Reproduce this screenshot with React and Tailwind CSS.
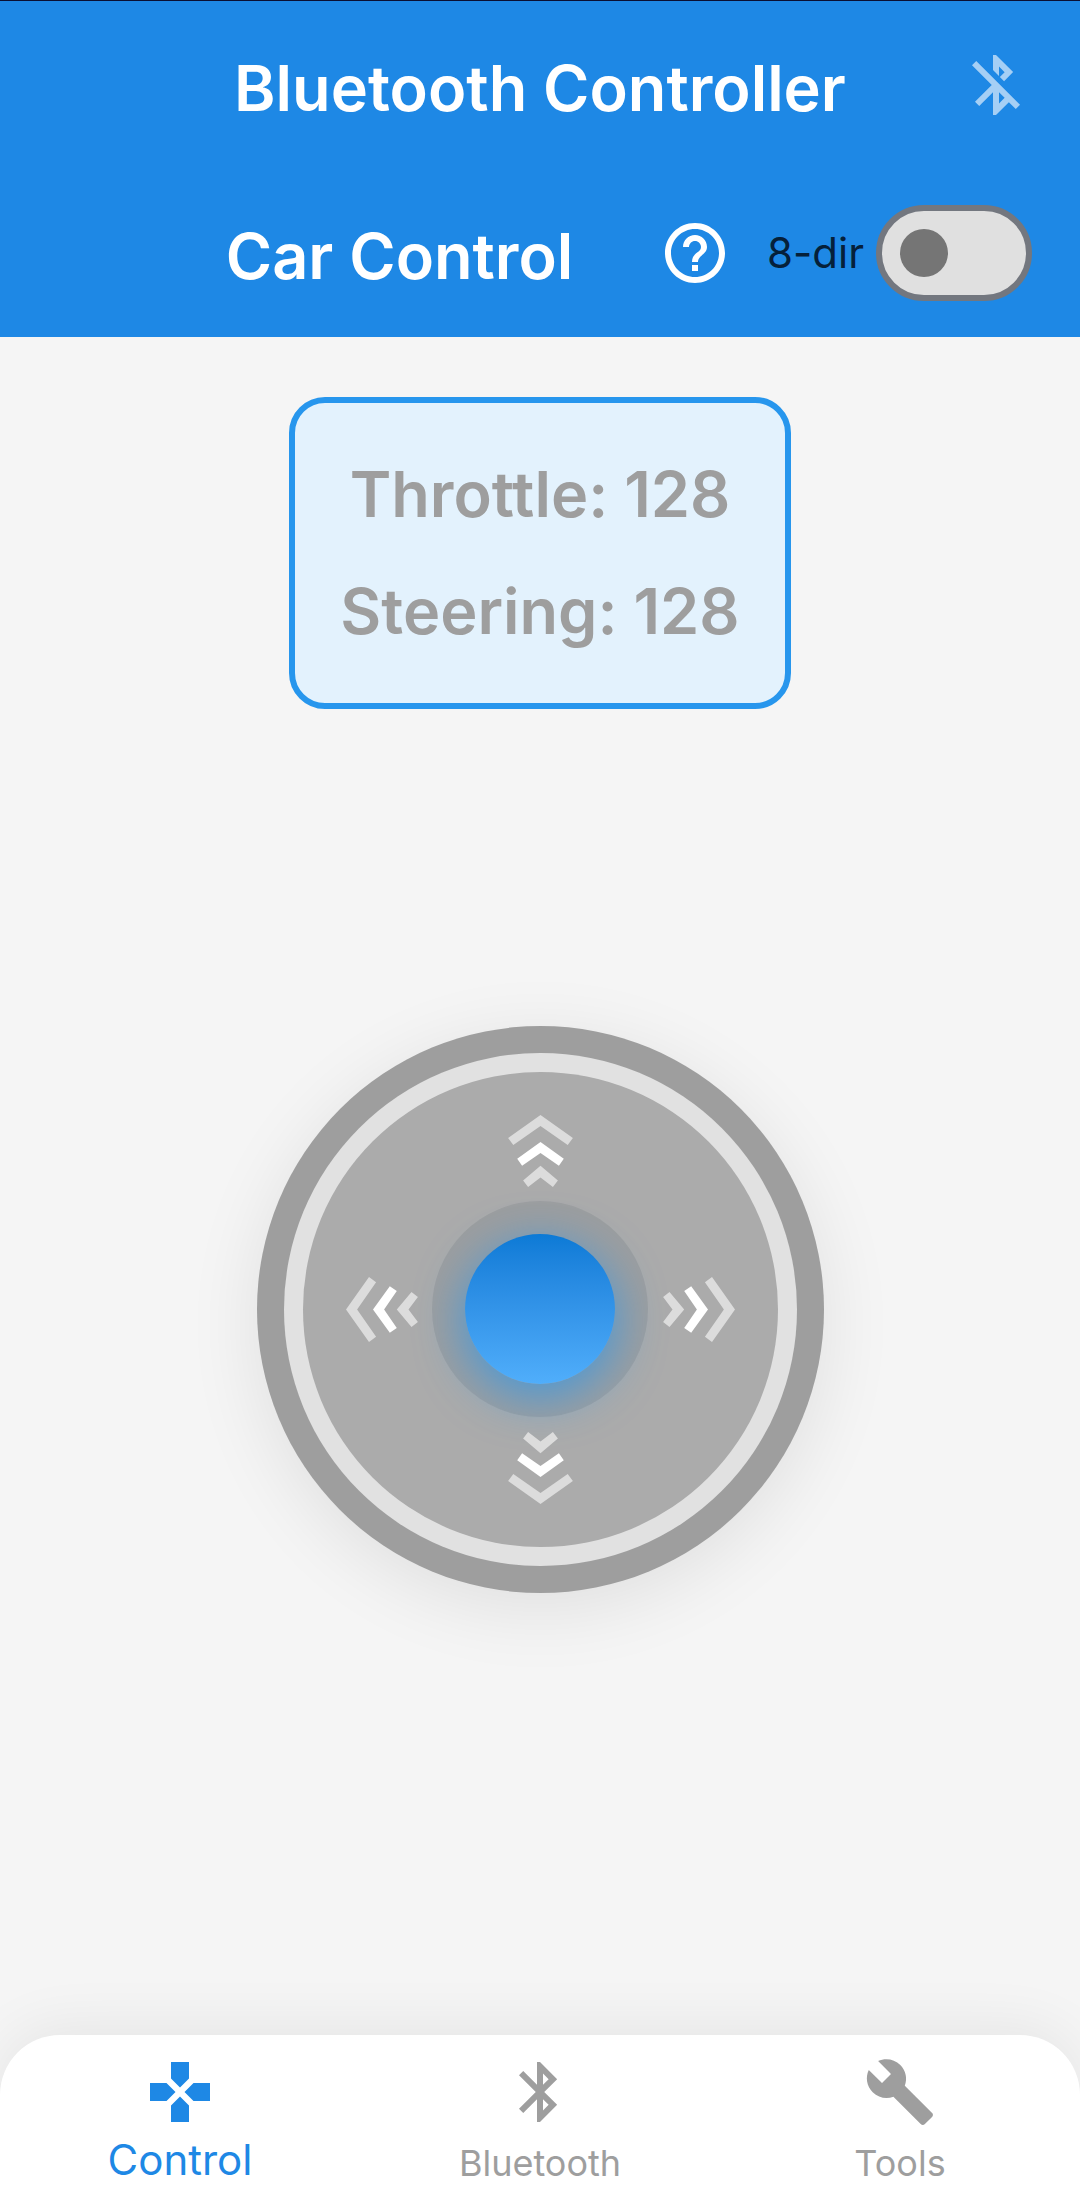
import React, { useState } from "react";
import {
  MdBluetooth,
  MdBluetoothDisabled,
  MdBuild,
  MdGamepad,
  MdHelpOutline,
} from "react-icons/md";

const tabs = [
  { id: "control", label: "Control", Icon: MdGamepad },
  { id: "bluetooth", label: "Bluetooth", Icon: MdBluetooth },
  { id: "tools", label: "Tools", Icon: MdBuild },
];

function DirectionSwitch({ checked, onChange }) {
  return (
    <label className="flex cursor-pointer items-center gap-3 text-[42px] leading-none text-[#05203a]">
      <span>8-dir</span>
      <span className="flex h-24 w-[156px] items-center rounded-full border-6 border-[#73777f] bg-[#e0e0e0] px-[18px] has-checked:justify-end has-checked:bg-[#90caf9]">
        <input
          type="checkbox"
          role="switch"
          checked={checked}
          onChange={(e) => onChange(e.target.checked)}
          className="size-12 cursor-pointer appearance-none rounded-full bg-[#757575]"
        />
      </span>
    </label>
  );
}

function Header({ eightDir, setEightDir }) {
  return (
    <header className="border-t border-[#0a0f33] bg-[#1e88e5] text-white">
      <div className="flex h-42 items-center justify-end pr-12 pl-[120px]">
        <h1 className="flex-1 pt-1.5 text-center text-[63px] leading-none font-semibold">
          Bluetooth Controller
        </h1>
        <button type="button" aria-label="Bluetooth disconnected" className="text-[#a5cff5]">
          <MdBluetoothDisabled className="size-18" />
        </button>
      </div>
      <div className="flex h-42 items-center pr-12 pl-44">
        <h2 className="flex-1 pt-1.5 text-center text-[63px] leading-none font-semibold whitespace-nowrap">
          Car Control
        </h2>
        <button type="button" aria-label="Help" className="px-9">
          <MdHelpOutline className="size-18" />
        </button>
        <DirectionSwitch checked={eightDir} onChange={setEightDir} />
      </div>
    </header>
  );
}

function Readout({ throttle, steering }) {
  return (
    <section className="flex flex-col items-center gap-9 rounded-[36px] border-6 border-[#2796ed] bg-[#e3f2fd] px-[45px] py-[51px] text-[63px] leading-[81px] font-semibold text-[#9e9e9e]">
      <p>Throttle: {throttle}</p>
      <p>Steering: {steering}</p>
    </section>
  );
}

const arrowTurns = [0, 90, 180, 270];

function Arrows() {
  return (
    <g>
      <polygon
        fill="#dcdcdc"
        points="0,-194.5 32.4,-171.5 27.2,-164.4 0,-183.4 -27.2,-164.4 -32.4,-171.5"
      />
      <polygon
        fill="#ffffff"
        points="0,-167.5 23.3,-150.7 18.4,-143.7 0,-156.4 -18.4,-143.7 -23.3,-150.7"
      />
      <polygon
        fill="#dcdcdc"
        points="0,-143.7 17.4,-129 12.4,-122.6 0,-132 -12.4,-122.6 -17.4,-129"
      />
    </g>
  );
}

function Joystick() {
  return (
    <div className="grid size-[567px] place-items-center rounded-full bg-[#9e9e9e] shadow-[0_15px_75px_rgba(0,0,0,0.09)]">
      <div className="grid size-[513px] place-items-center rounded-full bg-[#e1e1e1]">
        <div className="relative grid size-[475px] place-items-center rounded-full bg-[#ababab]">
          <div className="grid size-[216px] place-items-center rounded-full bg-[#9d9e9f]">
            <button
              type="button"
              aria-label="Joystick"
              className="size-[150px] rounded-full bg-linear-to-b from-[#0b7ad6] to-[#50aefb] shadow-[0_12px_45px_3px_rgba(33,150,243,0.65)]"
            />
          </div>
          <svg
            viewBox="-237.5 -237.5 475 475"
            className="pointer-events-none absolute inset-0 size-full"
            aria-hidden="true"
          >
            {arrowTurns.map((turn) => (
              <g key={turn} transform={`rotate(${turn})`}>
                <Arrows />
              </g>
            ))}
          </svg>
        </div>
      </div>
    </div>
  );
}

function TabBar({ active, onSelect }) {
  return (
    <nav className="grid h-[174px] grid-cols-3 rounded-t-[60px] bg-white shadow-[0_-6px_60px_rgba(0,0,0,0.07)]">
      {tabs.map(({ id, label, Icon }) => (
        <button
          key={id}
          type="button"
          onClick={() => onSelect(id)}
          aria-current={active === id ? "page" : undefined}
          className={
            active === id
              ? "flex flex-col items-center pt-[21px] text-[42px] leading-[42px] text-[#1e88e5]"
              : "flex flex-col items-center pt-[21px] text-[36px] leading-[36px] text-[#9e9e9e]"
          }
        >
          <Icon className="size-18" />
          <span className="flex h-[53px] items-end">{label}</span>
        </button>
      ))}
    </nav>
  );
}

export default function App() {
  const [eightDir, setEightDir] = useState(false);
  const [tab, setTab] = useState("control");

  return (
    <div className="flex min-h-screen flex-col bg-[#f5f5f5] font-['Inter',sans-serif]">
      <Header eightDir={eightDir} setEightDir={setEightDir} />
      <main className="flex flex-1 flex-col items-center pt-15">
        <Readout throttle={128} steering={128} />
        <div className="flex flex-1 items-center justify-center pb-[126px]">
          <Joystick />
        </div>
      </main>
      <TabBar active={tab} onSelect={setTab} />
    </div>
  );
}
